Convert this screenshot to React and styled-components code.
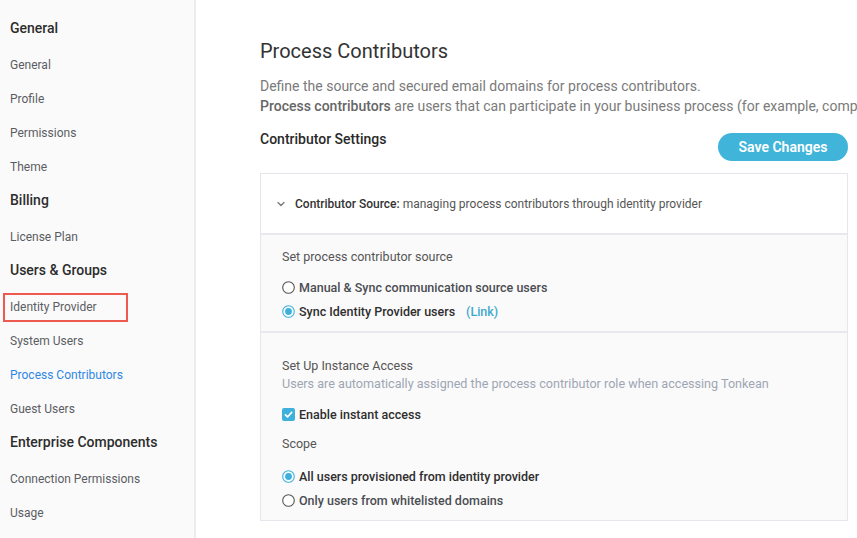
import styled, { createGlobalStyle } from 'styled-components'

const GlobalStyle = createGlobalStyle`
  html, body {
    margin: 0;
    padding: 0;
    background: #fff;
    font-family: Roboto, "Liberation Sans", sans-serif;
  }
  * { box-sizing: border-box; }
`

const sidebar = [
  { title: 'General', items: ['General', 'Profile', 'Permissions', 'Theme'] },
  { title: 'Billing', items: ['License Plan'] },
  { title: 'Users & Groups', items: ['Identity Provider', 'System Users', 'Process Contributors', 'Guest Users'] },
  { title: 'Enterprise Components', items: ['Connection Permissions', 'Usage'] },
]

function Radio({ checked }) {
  return (
    <svg width="13" height="13" viewBox="0 0 13 13">
      <circle cx="6.5" cy="6.5" r="5.8" fill="#fff" stroke={checked ? '#3db1dc' : '#555'} strokeWidth="1.1" />
      {checked && <circle cx="6.5" cy="6.5" r="3.4" fill="#3db1dc" />}
    </svg>
  )
}

function Checkbox() {
  return (
    <svg width="13" height="13" viewBox="0 0 13 13">
      <rect x="0" y="0" width="13" height="13" rx="2" fill="#3db1dc" />
      <path d="M3.4 6.8 L5.6 8.9 L9.8 4.3" fill="none" stroke="#fff" strokeWidth="1.7" strokeLinecap="round" strokeLinejoin="round" />
    </svg>
  )
}

export default function App() {
  return (
    <>
      <GlobalStyle />
      <Page>
        <Sidebar>
          {sidebar.map((group) => (
            <div key={group.title}>
              <GroupTitle>{group.title}</GroupTitle>
              {group.items.map((item) => (
                <NavItem key={item} $active={item === 'Process Contributors'}>
                  {item === 'Identity Provider' ? <Highlight>{item}</Highlight> : item}
                </NavItem>
              ))}
            </div>
          ))}
        </Sidebar>
        <Main>
          <Title>Process Contributors</Title>
          <Description>
            <p>Define the source and secured email domains for process contributors.</p>
            <p>
              <strong>Process contributors</strong> are users that can participate in your business process (for example, comp
            </p>
          </Description>
          <SettingsBar>
            <SettingsTitle>Contributor Settings</SettingsTitle>
            <SaveButton>Save Changes</SaveButton>
          </SettingsBar>
          <Card>
            <CardHeader>
              <svg width="8" height="6" viewBox="0 0 8 6">
                <path d="M1 1.5 L4 4.5 L7 1.5" fill="none" stroke="#777" strokeWidth="1.3" strokeLinecap="round" />
              </svg>
              <span>
                <b>Contributor Source:</b> managing process contributors through identity provider
              </span>
            </CardHeader>
            <Section $height={98} $pad={13}>
              <SectionLabel>Set process contributor source</SectionLabel>
              <Options $top={12}>
                <Option>
                  <Radio />
                  <OptionText $muted>Manual &amp; Sync communication source users</OptionText>
                </Option>
                <Option>
                  <Radio checked />
                  <OptionText>Sync Identity Provider users</OptionText>
                  <LinkText>(Link)</LinkText>
                </Option>
              </Options>
            </Section>
            <Section $height={189} $pad={24}>
              <SectionLabel>Set Up Instance Access</SectionLabel>
              <Hint>Users are automatically assigned the process contributor role when accessing Tonkean</Hint>
              <Option $top={12}>
                <Checkbox />
                <OptionText>Enable instant access</OptionText>
              </Option>
              <SectionLabel $top={12}>Scope</SectionLabel>
              <Options $top={14}>
                <Option>
                  <Radio checked />
                  <OptionText>All users provisioned from identity provider</OptionText>
                </Option>
                <Option>
                  <Radio />
                  <OptionText $muted>Only users from whitelisted domains</OptionText>
                </Option>
              </Options>
            </Section>
          </Card>
        </Main>
      </Page>
    </>
  )
}

const Page = styled.div`
  display: flex;
  width: 857px;
  height: 538px;
  overflow: hidden;
`

const Sidebar = styled.nav`
  width: 196px;
  flex-shrink: 0;
  background: #fafafa;
  border-right: 2px solid #ececf0;
  padding-top: 12px;
`

const GroupTitle = styled.div`
  height: 36px;
  padding: 7px 10px 0;
  font-size: 14px;
  font-weight: 500;
  color: #2d2d2d;
  line-height: 18px;
`

const NavItem = styled.div`
  height: 34px;
  display: flex;
  align-items: center;
  padding: 0 10px;
  font-size: 12px;
  color: ${(p) => (p.$active ? '#2f87e4' : '#5a5d63')};
`

const Highlight = styled.span`
  display: inline-block;
  margin-left: -7px;
  padding: 5px 29px 6px 5px;
  border: 2px solid #ee5a4f;
`

const Main = styled.main`
  flex: 1;
  min-width: 0;
  padding: 38px 9px 0 64px;
  overflow: hidden;
`

const Title = styled.h1`
  margin: 0;
  font-size: 20px;
  font-weight: 400;
  color: #333;
  line-height: 26px;
`

const Description = styled.div`
  margin-top: 12px;
  font-size: 14px;
  color: #7a7a7a;
  line-height: 20px;
  white-space: nowrap;

  p { margin: 0; }

  strong {
    font-weight: 500;
    color: #666;
  }
`

const SettingsBar = styled.div`
  display: flex;
  justify-content: space-between;
  align-items: flex-start;
  margin-top: 14px;
`

const SettingsTitle = styled.div`
  font-size: 14px;
  font-weight: 500;
  color: #2a2a2a;
  line-height: 18px;
`

const SaveButton = styled.button`
  margin-top: 3px;
  height: 28px;
  width: 130px;
  border: none;
  border-radius: 14px;
  background: #41b4da;
  color: #fff;
  font-family: inherit;
  font-size: 14px;
  font-weight: 600;
`

const Card = styled.div`
  margin-top: 12px;
  border: 1px solid #e6e6ec;
  width: 588px;
`

const CardHeader = styled.div`
  height: 59px;
  display: flex;
  align-items: center;
  gap: 10px;
  padding-left: 16px;
  font-size: 12px;
  color: #555;

  b {
    font-weight: 500;
    color: #333;
  }
`

const Section = styled.div`
  height: ${(p) => p.$height}px;
  background: #fafafa;
  border-top: 2px solid #e8e8ee;
  padding: ${(p) => p.$pad}px 21px 0;
`

const SectionLabel = styled.div`
  margin-top: ${(p) => p.$top || 0}px;
  font-size: 12.5px;
  color: #555;
  line-height: 18px;
`

const Hint = styled.div`
  font-size: 12.6px;
  color: #9ea6b4;
  line-height: 18px;
`

const Options = styled.div`
  display: flex;
  flex-direction: column;
  gap: 6px;
  margin-top: ${(p) => p.$top || 14}px;
`

const Option = styled.div`
  display: flex;
  align-items: center;
  gap: 4px;
  height: 18px;
  margin-top: ${(p) => p.$top || 0}px;
`

const OptionText = styled.span`
  font-size: 12.5px;
  font-weight: 500;
  color: ${(p) => (p.$muted ? '#4a4d52' : '#2e2e2e')};
`

const LinkText = styled.span`
  margin-left: 7px;
  font-size: 12.5px;
  font-weight: 500;
  color: #3da8cf;
`
